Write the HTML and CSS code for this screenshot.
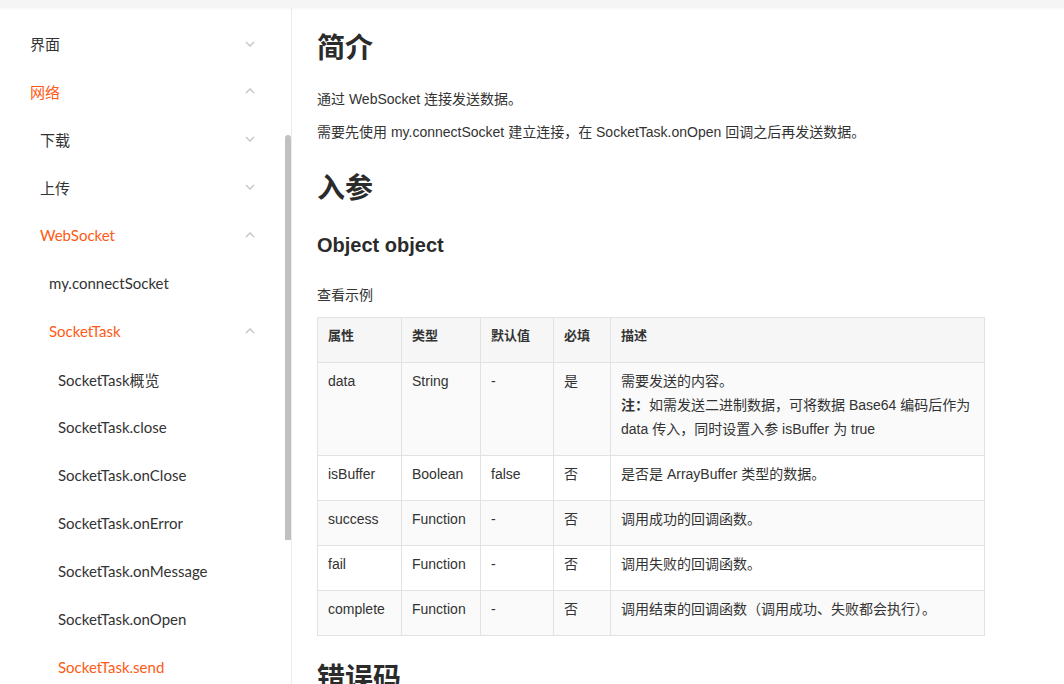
FILE: index.html
```html
<!DOCTYPE html>
<html lang="zh-CN">
<head>
<meta charset="utf-8">
<title>SocketTask.send</title>
<link rel="stylesheet" href="styles.css">
</head>
<body>
<div class="topbar"></div>
<div class="layout">
  <aside class="sidebar">
    <ul class="menu">
      <li class="item l1"><span>界面</span><svg class="chev" viewBox="0 0 10 6"><path d="M1 1 L5 5 L9 1"/></svg></li>
      <li class="item l1 active"><span>网络</span><svg class="chev" viewBox="0 0 10 6"><path d="M1 5 L5 1 L9 5"/></svg></li>
      <li class="item l2"><span>下载</span><svg class="chev" viewBox="0 0 10 6"><path d="M1 1 L5 5 L9 1"/></svg></li>
      <li class="item l2"><span>上传</span><svg class="chev" viewBox="0 0 10 6"><path d="M1 1 L5 5 L9 1"/></svg></li>
      <li class="item l2 active"><span>WebSocket</span><svg class="chev" viewBox="0 0 10 6"><path d="M1 5 L5 1 L9 5"/></svg></li>
      <li class="item l3"><span>my.connectSocket</span></li>
      <li class="item l3 active"><span>SocketTask</span><svg class="chev" viewBox="0 0 10 6"><path d="M1 5 L5 1 L9 5"/></svg></li>
      <li class="item l4"><span>SocketTask概览</span></li>
      <li class="item l4"><span>SocketTask.close</span></li>
      <li class="item l4"><span>SocketTask.onClose</span></li>
      <li class="item l4"><span>SocketTask.onError</span></li>
      <li class="item l4"><span>SocketTask.onMessage</span></li>
      <li class="item l4"><span>SocketTask.onOpen</span></li>
      <li class="item l4 active"><span>SocketTask.send</span></li>
    </ul>
    <div class="thumb"></div>
  </aside>
  <main class="content">
    <h1 class="h1 first">简介</h1>
    <p class="para">通过 WebSocket 连接发送数据。</p>
    <p class="para">需要先使用 my.connectSocket 建立连接，在 SocketTask.onOpen 回调之后再发送数据。</p>
    <h1 class="h1 second">入参</h1>
    <h3 class="h3">Object object</h3>
    <p class="example">查看示例</p>
    <table class="params">
      <colgroup>
        <col class="c1"><col class="c2"><col class="c3"><col class="c4"><col class="c5">
      </colgroup>
      <tbody>
        <tr class="head">
          <th>属性</th><th>类型</th><th>默认值</th><th>必填</th><th>描述</th>
        </tr>
        <tr>
          <td>data</td><td>String</td><td>-</td><td>是</td>
          <td><div class="line">需要发送的内容。</div><div class="line"><strong>注：</strong>如需发送二进制数据，可将数据 Base64 编码后作为 data 传入，同时设置入参 isBuffer 为 true</div></td>
        </tr>
        <tr>
          <td>isBuffer</td><td>Boolean</td><td>false</td><td>否</td><td>是否是 ArrayBuffer 类型的数据。</td>
        </tr>
        <tr>
          <td>success</td><td>Function</td><td>-</td><td>否</td><td>调用成功的回调函数。</td>
        </tr>
        <tr>
          <td>fail</td><td>Function</td><td>-</td><td>否</td><td>调用失败的回调函数。</td>
        </tr>
        <tr>
          <td>complete</td><td>Function</td><td>-</td><td>否</td><td>调用结束的回调函数（调用成功、失败都会执行）。</td>
        </tr>
      </tbody>
    </table>
    <h1 class="h1 third">错误码</h1>
  </main>
</div>
</body>
</html>
```

FILE: styles.css
```css
* { box-sizing: border-box; }
html, body {
  margin: 0;
  padding: 0;
  background: #fff;
  height: 684px;
  overflow: hidden;
}
body {
  font-family: "Liberation Sans", "Noto Sans CJK SC", sans-serif;
  color: #333;
}
.topbar {
  height: 8px;
  background: #f5f5f5;
  box-shadow: 0 1px 3px rgba(0,0,0,0.04);
  position: relative;
  z-index: 2;
}
.layout {
  display: flex;
  height: 676px;
}
.sidebar {
  width: 292px;
  flex: none;
  border-right: 1px solid #ececec;
  position: relative;
  overflow: hidden;
  font-family: "Lato", "Noto Sans CJK SC", sans-serif;
  font-size: 15px;
}
.menu {
  list-style: none;
  margin: 0;
  padding: 12px 0 0 0;
}
.item {
  height: 48px;
  display: flex;
  align-items: center;
  justify-content: space-between;
  padding-right: 36px;
  color: #333;
}
.item:first-child { height: 47px; }
.item.active { color: #ff5a14; }
.l1 { padding-left: 30px; }
.l2 { padding-left: 40px; }
.l3 { padding-left: 49px; }
.l4 { padding-left: 58px; }
.chev {
  width: 10px;
  height: 6px;
  fill: none;
  stroke: #c4c4c4;
  stroke-width: 1.3;
}
.thumb {
  position: absolute;
  left: 285px;
  top: 127px;
  width: 6px;
  height: 405px;
  background: #c1c1c1;
  border-radius: 3px 3px 0 0;
}
.content {
  flex: 1;
  padding-left: 25px;
  display: flex;
  flex-direction: column;
  align-items: flex-start;
}
.h1 {
  font-size: 28px;
  font-weight: bold;
  line-height: 40px;
  margin: 0;
  color: #2b2b2b;
}
.h1.first { margin-top: 21px; }
.h1.second { margin-top: 25px; }
.h1.third { margin-top: 23px; }
.para {
  font-size: 14px;
  line-height: 24px;
  margin: 0;
}
.h1.first + .para { margin-top: 18px; }
.para + .para { margin-top: 9px; }
.h3 {
  font-size: 20px;
  font-weight: bold;
  line-height: 30px;
  margin: 21px 0 0 0;
  color: #2b2b2b;
}
.example {
  font-size: 14px;
  line-height: 22px;
  margin: 24px 0 0 0;
}
.params {
  margin-top: 11px;
  width: 667px;
  border-collapse: collapse;
  table-layout: fixed;
  font-size: 14px;
}
.c1 { width: 84px; }
.c2 { width: 79px; }
.c3 { width: 73px; }
.c4 { width: 57px; }
.c5 { width: 374px; }
.params th, .params td {
  border: 1px solid #e2e2e2;
  padding: 6px 10px 14px 10px;
  line-height: 24px;
  text-align: left;
  vertical-align: top;
}
.params th {
  font-weight: bold;
  font-size: 13px;
  color: #333;
}
.params tr:nth-child(even) { background: #fafafa; }
.params tr.head { background: #f6f6f6; }
.params strong { font-weight: bold; }
.line { line-height: 24px; }
```
